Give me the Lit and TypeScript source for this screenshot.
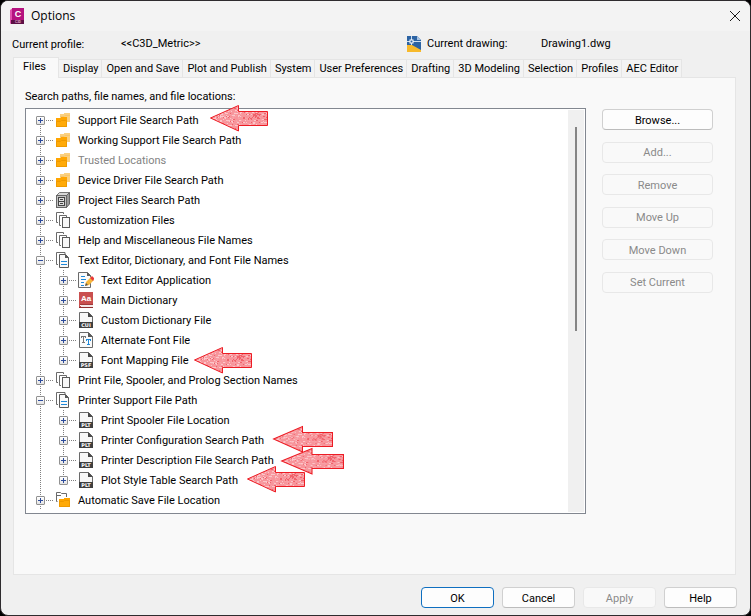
import { LitElement, html, svg, css, nothing } from "lit";
import { customElement, property, state } from "lit/decorators.js";
import { classMap } from "lit/directives/class-map.js";
import { styleMap } from "lit/directives/style-map.js";

type IconName =
  | "folders" | "cabinet" | "papers" | "docs" | "editor" | "dictionary"
  | "cui" | "fonts" | "psf" | "plt" | "autosave";

interface TreeNode {
  label: string;
  icon: IconName;
  muted?: boolean;
  children?: TreeNode[];
}

interface Mark {
  x: number;
  y: number;
  width: number;
}

const NODES: TreeNode[] = [
  { label: "Support File Search Path", icon: "folders" },
  { label: "Working Support File Search Path", icon: "folders" },
  { label: "Trusted Locations", icon: "folders", muted: true },
  { label: "Device Driver File Search Path", icon: "folders" },
  { label: "Project Files Search Path", icon: "cabinet" },
  { label: "Customization Files", icon: "papers" },
  { label: "Help and Miscellaneous File Names", icon: "papers" },
  {
    label: "Text Editor, Dictionary, and Font File Names",
    icon: "docs",
    children: [
      { label: "Text Editor Application", icon: "editor" },
      { label: "Main Dictionary", icon: "dictionary" },
      { label: "Custom Dictionary File", icon: "cui" },
      { label: "Alternate Font File", icon: "fonts" },
      { label: "Font Mapping File", icon: "psf" },
    ],
  },
  { label: "Print File, Spooler, and Prolog Section Names", icon: "papers" },
  {
    label: "Printer Support File Path",
    icon: "docs",
    children: [
      { label: "Print Spooler File Location", icon: "plt" },
      { label: "Printer Configuration Search Path", icon: "plt" },
      { label: "Printer Description File Search Path", icon: "plt" },
      { label: "Plot Style Table Search Path", icon: "plt" },
    ],
  },
  { label: "Automatic Save File Location", icon: "autosave" },
];

// Hand-placed pointers over the tree, measured from its top left corner.
const MARKS: Mark[] = [
  { x: 183, y: -5, width: 59 },
  { x: 167, y: 237, width: 59 },
  { x: 246, y: 316, width: 61 },
  { x: 254, y: 338, width: 64 },
  { x: 220, y: 356, width: 59 },
];

const TABS = [
  "Files", "Display", "Open and Save", "Plot and Publish", "System",
  "User Preferences", "Drafting", "3D Modeling", "Selection", "Profiles",
  "AEC Editor",
];

const page = (label: string) => svg`
  <path d="M1.5 15V0.5H10.5L14.5 4.5V15" fill="#f7f7f7" stroke="#6a6a6a"/>
  <path d="M10 0L15 5H10Z" fill="#4a4a4a"/>
  <rect x="1" y="10" width="14" height="6" fill="#3f3f3f"/>
  <text x="8" y="15" text-anchor="middle" class="tag">${label}</text>`;

const ICONS: Record<IconName, unknown> = {
  folders: svg`
    <path d="M5 2H9V1H15V10H5Z" fill="#fbd07f"/>
    <path d="M5 4.5H9L10 3.5H15" fill="none" stroke="#f3c671"/>
    <path d="M1 6H6V5H12V15H1Z" fill="#ffa500"/>
    <path d="M1.5 9.5H5.5L6.5 8.5H11.5V14.5H1.5Z" fill="#ffaa08" stroke="#ee9900"/>`,
  cabinet: svg`
    <path d="M1.5 3.5L4.5 0.5H14.5L11.5 3.5Z" fill="#d8d8d8" stroke="#777"/>
    <path d="M11.5 3.5L14.5 0.5V12L11.5 15.5Z" fill="#9a9a9a" stroke="#666"/>
    <rect x="1.5" y="3.5" width="10" height="12" fill="#c4c4c4" stroke="#666"/>
    <rect x="3.5" y="5.5" width="6" height="8" fill="#ddd" stroke="#444"/>
    <path d="M4 9.5H9M5 7.5H8M5 11.5H8" stroke="#444"/>`,
  papers: svg`
    <path d="M3 10.5H1.5V0.5H8.5V2" fill="none" stroke="#6a6a6a"/>
    <path d="M6 13.5H4.5V3.5H11.5V5" fill="none" stroke="#6a6a6a"/>
    <rect x="7.5" y="5.5" width="7" height="10" fill="#f8f8f8" stroke="#5a5a5a"/>`,
  docs: svg`
    <path d="M3 12.5H1.5V0.5H10V2" fill="none" stroke="#6a6a6a"/>
    <path d="M4.5 2.5H10.5L13.5 5.5V15.5H4.5Z" fill="#fafafa" stroke="#5a5a5a"/>
    <path d="M10 2L14 6H10Z" fill="#5a5a5a"/>
    <path d="M6 9.5H12M6 12.5H12" stroke="#1e88d8"/>`,
  editor: svg`
    <path d="M9.5 15.5H0.5V0.5H9.5L12.5 3.5V5M12.5 11V15.5H9" fill="#fafafa" stroke="#6a6a6a"/>
    <path d="M9 0L13 4H9Z" fill="#5a5a5a"/>
    <path d="M3 4.5H7M3 7.5H8M3 10.5H6M3 13.5H6" stroke="#1e88d8"/>
    <path d="M7 14L8 10L13 5L16 8L11 13Z" fill="#f6b73c"/>
    <path d="M12 6L14 4L16 6V7L15 9Z" fill="#e83a3a"/>
    <path d="M7 14L8 11L10 13Z" fill="#555"/>`,
  dictionary: svg`
    <path d="M1 0H15V12H2V14H15V15H1Z" fill="#c94f4f"/>
    <path d="M2 12.5H15" stroke="#a03a3a"/>
    <rect x="3" y="13" width="12" height="2" fill="#f4e8e8"/>
    <path d="M1 15.5H15" stroke="#8d2f2f"/>
    <text x="8" y="9" text-anchor="middle" class="aa">Aa</text>`,
  cui: page("CUI"),
  fonts: svg`
    <path d="M1.5 15.5V0.5H10.5L14.5 4.5V15.5Z" fill="#fafafa" stroke="#6a6a6a"/>
    <path d="M10 0L15 5H10Z" fill="#5a5a5a"/>
    <path d="M3 4.5H8M5.5 4V11M4 10.5H7M3.5 4V6M7.5 4V6" stroke="#777" fill="none"/>
    <path d="M8 7.5H13M10.5 7V13M9 12.5H12M8.5 7V9M12.5 7V9" stroke="#1e88d8" fill="none"/>`,
  psf: page("PSF"),
  plt: page("PLT"),
  autosave: svg`
    <path d="M2.5 9.5H1.5V0.5H5.5L6.5 1.5H11.5V5M1.5 3.5H6" fill="none" stroke="#6a6a6a"/>
    <path d="M4 7H9V6H15V15H4Z" fill="#ffa500"/>
    <path d="M4.5 9.5H8.5L9.5 8.5H14.5V14.5H4.5Z" fill="#ffaa08" stroke="#ee9900"/>`,
};

// Chalky flecks inside the pointers, laid out by a small fixed generator.
const FLECKS = (() => {
  let seed = 20771;
  const next = () => {
    seed ^= seed << 13;
    seed ^= seed >>> 17;
    seed ^= seed << 5;
    return (seed >>> 0) / 4294967296;
  };
  const list: { x: number; y: number; w: number; fill: string }[] = [];
  for (let i = 0; i < 620; i++) {
    const x = Math.floor(next() * 58);
    const y = Math.floor(next() * 27);
    const tone = next();
    const solid = x > 32 && x < 56 && y > 8 && y < 15;
    const fill = tone < (solid ? 0.55 : 0.12) ? "#f0626b" : tone < 0.6 ? "#fbc6c9" : "#f8a0a6";
    list.push({ x, y, w: 1 + Math.floor(next() * 2), fill });
  }
  return list;
})();

@customElement("sketch-arrow")
export class SketchArrow extends LitElement {
  static styles = css`
    :host { display: block; height: 28px; }
    svg { display: block; width: 100%; height: 100%; }
  `;

  render() {
    const outline = "M1.5 14L29.5 1.5V7.5H58.5V21.5H29.5V27Z";
    return html`<svg viewBox="0 0 59 28" preserveAspectRatio="none" aria-hidden="true">
      <defs><clipPath id="shape"><path d=${outline} /></clipPath></defs>
      <path d=${outline} fill="#f7959b" />
      <g clip-path="url(#shape)">
        ${FLECKS.map((f) => svg`<rect x=${f.x} y=${f.y} width=${f.w} height="1" fill=${f.fill} />`)}
      </g>
      <path d=${outline} fill="none" stroke="#ed1c24" />
    </svg>`;
  }
}

@customElement("path-tree")
export class PathTree extends LitElement {
  @property({ attribute: false }) nodes: TreeNode[] = [];
  @state() private open = new Set(NODES.filter((n) => n.children).map((n) => n.label));

  static styles = css`
    :host { display: flex; position: relative; box-sizing: border-box; border: 1px solid #828790; background: #fff; padding: 1px; }
    ul { list-style: none; margin: 0; padding: 0; }
    .root { flex: 1; min-width: 0; }
    li {
      background: repeating-linear-gradient(#808080 0 1px, transparent 1px 2px) 13px 0 / 1px 100% no-repeat;
    }
    .root > li:first-child { background-position: 13px 10px; }
    .branch { margin-left: 23px; }
    .branch > li:last-child { background-size: 1px 10px; }
    .row { display: flex; align-items: center; height: 20px; padding-left: 9px; white-space: nowrap; }
    .toggle {
      box-sizing: border-box; width: 9px; height: 9px; padding: 0; flex: none;
      border: 1px solid #919191; border-radius: 1px; background: linear-gradient(#fff, #e4e4e4);
    }
    .toggle svg { display: block; width: 7px; height: 7px; }
    .leader {
      width: 8px; height: 1px; margin-right: 2px; flex: none;
      background: repeating-linear-gradient(90deg, transparent 0 1px, #808080 1px 2px);
    }
    .icon { width: 16px; height: 16px; margin-right: 7px; flex: none; }
    .tag { font: bold 5px "DejaVu Sans", sans-serif; fill: #fff; }
    .aa { font: bold 8px "Liberation Sans", sans-serif; fill: #fff; }
    .name { padding-top: 2px; }
    .muted { color: #838383; }
    .bar { width: 16px; background: #f0f0f0; flex: none; padding-top: 17px; box-sizing: border-box; }
    .thumb { width: 2px; height: 53%; margin: 0 auto 0 7px; background: #858585; }
    .mark { position: absolute; }
  `;

  private flip(label: string) {
    const open = new Set(this.open);
    open.has(label) ? open.delete(label) : open.add(label);
    this.open = open;
  }

  private item(node: TreeNode): unknown {
    const open = !!node.children && this.open.has(node.label);
    return html`<li role="treeitem" aria-expanded=${open}>
      <div class="row">
        <button class="toggle" aria-label=${(open ? "Collapse " : "Expand ") + node.label}
          @click=${() => this.flip(node.label)}>
          <svg viewBox="0 0 7 7"><path d=${open ? "M1 3.5H6" : "M1 3.5H6M3.5 1V6"} stroke="#2b4a9b" /></svg>
        </button>
        <span class="leader"></span>
        <svg class="icon" viewBox="0 0 16 16" aria-hidden="true">${ICONS[node.icon]}</svg>
        <span class=${classMap({ name: true, muted: !!node.muted })}>${node.label}</span>
      </div>
      ${open ? html`<ul class="branch" role="group">${node.children!.map((n) => this.item(n))}</ul>` : nothing}
    </li>`;
  }

  render() {
    return html`
      <ul class="root" role="tree" aria-label="Search paths">${this.nodes.map((n) => this.item(n))}</ul>
      <div class="bar"><div class="thumb"></div></div>
      ${MARKS.map((m) => html`<sketch-arrow class="mark"
        style=${styleMap({ left: `${m.x}px`, top: `${m.y}px`, width: `${m.width}px` })}></sketch-arrow>`)}
    `;
  }
}

@customElement("app-root")
export class AppRoot extends LitElement {
  @state() private tab = "Files";

  static styles = css`
    :host { display: block; background: #000; color: #000; font: 11px/14px Roboto, "Liberation Sans", sans-serif; }
    .window {
      box-sizing: border-box; min-height: 100vh; display: flex; flex-direction: column; overflow: hidden;
      border: 1px solid #2e2b2e; border-radius: 8px; background: #f0f0f0;
    }
    .title { display: flex; align-items: center; height: 30px; padding: 0 9px 0 8px; background: #f3f3f3; }
    .logo { width: 16px; height: 16px; margin-right: 6px; }
    .logo-c { font: bold 9px "Liberation Sans", sans-serif; fill: #fff; }
    .logo-tag { font: bold 3px "Liberation Sans", sans-serif; fill: #e9b6d8; }
    h1 { flex: 1; margin: 0; font: 12px/16px "Open Sans", sans-serif; }
    .close { width: 12px; height: 12px; padding: 0; border: 0; background: none; }
    .close svg { display: block; }
    .facts { display: grid; grid-template-columns: 109px minmax(0, 286px) 20px 114px auto; align-items: center; height: 26px; padding-left: 11px; }
    .facts > .profile { padding-top: 2px; }
    .tabs { display: flex; align-items: flex-end; height: 20px; padding-left: 12px; }
    .tab {
      box-sizing: border-box; height: 18px; padding: 0 3px 0 4px; font: inherit; color: inherit; white-space: nowrap;
      border: solid #e5e5e5; border-width: 1px 1px 0 0; background: #f3f3f3;
    }
    .tab.on { height: 21px; margin-bottom: -1px; padding: 0 12px 3px 9px; border-left-width: 1px; background: #f9f9f9; position: relative; }
    .panel {
      flex: 1; display: flex; flex-direction: column; margin: 0 14px 0 12px; padding: 12px 22px 60px 11px;
      border: 1px solid #e5e5e5; background: #f9f9f9;
    }
    .caption { margin: 0 0 4px; }
    .body { flex: 1; display: flex; gap: 16px; }
    path-tree { flex: 1; min-width: 0; }
    .actions { display: flex; flex-direction: column; justify-content: space-between; width: 111px; height: 184px; padding-top: 1px; }
    .btn {
      box-sizing: border-box; height: 21px; padding: 2px 0 0; font: inherit; color: #000;
      border: 1px solid #d0d0d0; border-bottom-color: #bcbcbc; border-radius: 4px; background: #fdfdfd;
    }
    .btn:disabled { color: #8a8a8a; border-color: #e8e8e8; background: #f9f9f9; }
    .btn.main { border-color: #0f6fc0; }
    .footer { display: flex; justify-content: flex-end; gap: 8px; padding: 12px 13px 7px; }
    .footer .btn { width: 73px; }
  `;

  render() {
    return html`<main class="window">
      <header class="title">
        <svg class="logo" viewBox="0 0 16 16" aria-hidden="true">
          <path d="M1 2L4 0V14L1 16Z" fill="#e051ad" />
          <path d="M3 0H15V12H3Z" fill="#b5127f" />
          <path d="M2 12H15V16H2Z" fill="#5d0f45" />
          <text x="9" y="9" text-anchor="middle" class="logo-c">C</text>
          <text x="9" y="15" text-anchor="middle" class="logo-tag">C3D</text>
        </svg>
        <h1>Options</h1>
        <button class="close" aria-label="Close">
          <svg width="12" height="12" viewBox="0 0 12 12"><path d="M1 1L11 11M11 1L1 11" stroke="#1a1a1a" /></svg>
        </button>
      </header>
      <div class="facts">
        <span class="profile">Current profile:</span>
        <span>&lt;&lt;C3D_Metric&gt;&gt;</span>
        <svg width="16" height="16" viewBox="0 0 16 16" aria-hidden="true">
          <path d="M0 0H10L14 4V16H0Z" fill="#2c63a3" />
          <path d="M10 0L14 4H10Z" fill="#a9c4e2" />
          <path d="M0 9L5 9L14 14V16H0Z" fill="#f7b92b" />
          <path d="M0 5.5H14M4.5 0V9" stroke="#cfe0f2" />
          <rect x="3" y="4" width="3" height="3" fill="#2c63a3" stroke="#fff" />
        </svg>
        <span>Current drawing:</span>
        <span>Drawing1.dwg</span>
      </div>
      <div class="tabs" role="tablist">
        ${TABS.map((name) => html`<button role="tab" aria-selected=${name === this.tab}
          class=${classMap({ tab: true, on: name === this.tab })}
          @click=${() => (this.tab = name)}>${name}</button>`)}
      </div>
      <section class="panel" role="tabpanel">
        <p class="caption">Search paths, file names, and file locations:</p>
        <div class="body">
          <path-tree .nodes=${NODES}></path-tree>
          <div class="actions">
            <button class="btn">Browse...</button>
            ${["Add...", "Remove", "Move Up", "Move Down", "Set Current"].map(
              (name) => html`<button class="btn" disabled>${name}</button>`)}
          </div>
        </div>
      </section>
      <footer class="footer">
        <button class="btn main">OK</button>
        <button class="btn">Cancel</button>
        <button class="btn" disabled>Apply</button>
        <button class="btn">Help</button>
      </footer>
    </main>`;
  }
}
